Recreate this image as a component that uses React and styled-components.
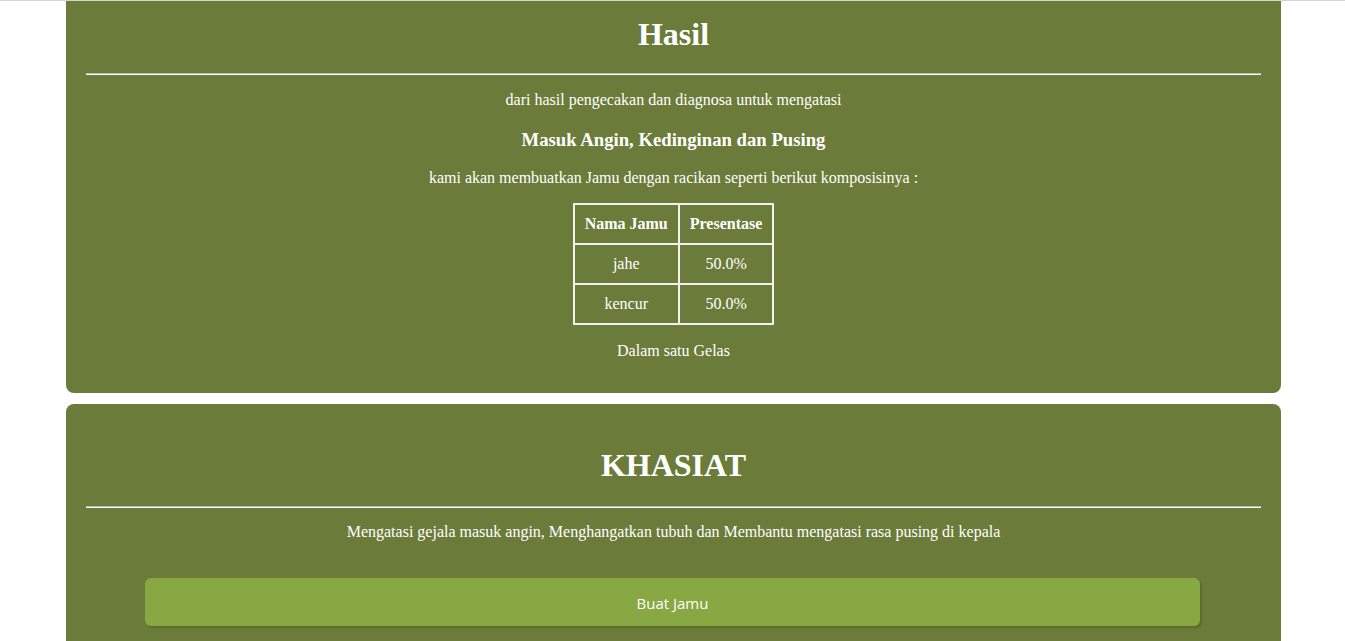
import React from "react";
import styled, { createGlobalStyle } from "styled-components";

const GlobalStyle = createGlobalStyle`
  body {
    margin: 0;
    background: #ffffff;
    font-family: "Liberation Serif", "Times New Roman", serif;
  }
`;

const Page = styled.div`
  border-top: 1px solid #d4d4d4;
  height: 640px;
  overflow: hidden;
`;

const Inner = styled.div`
  margin-top: -28px;
  padding-left: 2px;
  display: flex;
  flex-direction: column;
  align-items: center;
  gap: 11px;
`;

const Card = styled.section`
  width: 1175px;
  padding: 20px 20px 33px;
  background: #6a7b3a;
  border-radius: 8px;
  color: #ffffff;
  display: flex;
  flex-direction: column;
  align-items: center;
  text-align: center;
`;

const Title = styled.h1`
  margin: 24px 0 0;
  font-size: 32px;
  line-height: 34px;
  font-weight: bold;
`;

const Rule = styled.hr`
  width: 100%;
  margin: ${props => props.$top || 22}px 0 0;
  border: none;
  border-top: 1px solid #b9b9b9;
  border-bottom: 1px solid #ffffff;
`;

const Text = styled.p`
  margin: ${props => props.$top || 0}px 0 0;
  font-size: 16px;
  line-height: 18px;
`;

const Disease = styled.h3`
  margin: 21px 0 0;
  font-size: 18.7px;
  line-height: 20px;
  font-weight: bold;
`;

const Table = styled.table`
  margin-top: 16px;
  border-collapse: collapse;
  border: 2px solid #f2f2f2;
  font-size: 16px;
`;

const Th = styled.th`
  border: 2px solid #f2f2f2;
  height: 38px;
  padding: 0 10px;
  font-weight: bold;
  white-space: nowrap;
`;

const Td = styled.td`
  border: 2px solid #f2f2f2;
  height: 38px;
  padding: 0 10px;
  width: ${props => props.$w}px;
`;

const Button = styled.button`
  margin: 37px 2px 0 0;
  width: 1055px;
  height: 48px;
  border: none;
  border-radius: 6px;
  background: #87a842;
  box-shadow: 2px 2px 1px #5a6f2a;
  color: #ffffff;
  font-family: "Open Sans", "Liberation Sans", sans-serif;
  font-size: 15px;
  padding-top: 2px;
  cursor: pointer;
`;

const rows = [
  { name: "jahe", pct: "50.0%" },
  { name: "kencur", pct: "50.0%" },
];

const App = () => {
  return (
    <Page>
      <GlobalStyle />
      <Inner>
        <Card>
          <Title>Hasil</Title>
          <Rule />
          <Text $top={16}>dari hasil pengecakan dan diagnosa untuk mengatasi</Text>
          <Disease>Masuk Angin, Kedinginan dan Pusing</Disease>
          <Text $top={19}>
            kami akan membuatkan Jamu dengan racikan seperti berikut komposisinya :
          </Text>
          <Table>
            <thead>
              <tr>
                <Th>Nama Jamu</Th>
                <Th>Presentase</Th>
              </tr>
            </thead>
            <tbody>
              {rows.map(row => (
                <tr key={row.name}>
                  <Td $w={83}>{row.name}</Td>
                  <Td $w={72}>{row.pct}</Td>
                </tr>
              ))}
            </tbody>
          </Table>
          <Text $top={17}>Dalam satu Gelas</Text>
        </Card>
        <Card>
          <Title>KHASIAT</Title>
          <Rule $top={24} />
          <Text $top={15}>
            Mengatasi gejala masuk angin, Menghangatkan tubuh dan Membantu mengatasi rasa pusing di kepala
          </Text>
          <Button>Buat Jamu</Button>
        </Card>
      </Inner>
    </Page>
  );
};

export default App;
